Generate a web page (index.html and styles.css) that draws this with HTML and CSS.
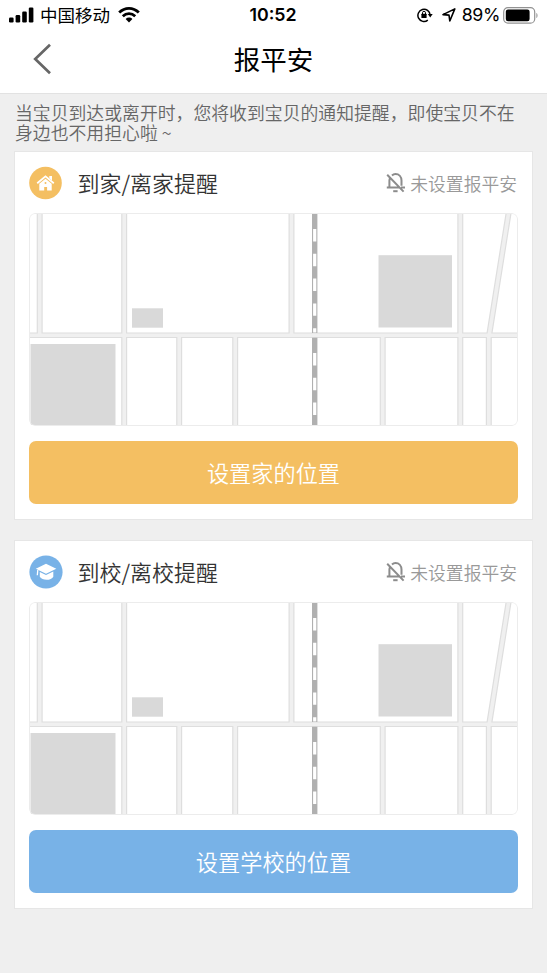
FILE: index.html
```html
<!DOCTYPE html>
<html lang="zh-CN">
<head>
<meta charset="utf-8">
<title>报平安</title>
<link rel="stylesheet" href="styles.css">
</head>
<body>
<svg class="defs" width="0" height="0" aria-hidden="true">
  <symbol id="map" viewBox="0 0 489 213">
    <rect width="489" height="213" fill="#fff"/>
    <g fill="#d9d9d9">
      <rect x="1.5" y="131" width="85" height="81"/>
      <rect x="103" y="95.3" width="31" height="19.4"/>
      <rect x="349.5" y="42.2" width="73.5" height="72.3"/>
    </g>
    <g fill="none" stroke="#dedede" stroke-width="6">
      <path d="M10.7 0V122M95.2 0V213M262.5 0V122M431.3 0V213M150.2 122V213M206.2 122V213M353.7 122V213M459.8 122V213M479.6 0L460.2 122"/>
      <path d="M0 122.2H489" stroke-width="5.4"/>
    </g>
    <g fill="none" stroke="#f0f0f0" stroke-width="3.6">
      <path d="M10.7 0V122M95.2 0V213M262.5 0V122M431.3 0V213M150.2 122V213M206.2 122V213M353.7 122V213M459.8 122V213M479.6 0L460.2 122"/>
      <path d="M0 122.2H489" stroke-width="3.4"/>
    </g>
    <path d="M285.7 0V120M285.7 124.7V213" stroke="#b0b0b0" stroke-width="5.4"/>
    <path d="M285.7 16V28.4M285.7 40.8V53.2M285.7 65.6V78M285.7 90.4V102.8M285.7 115.2V119.5M285.7 140V152.4M285.7 164.8V177.2M285.7 189.6V202" stroke="#fff" stroke-width="3.2"/>
  </symbol>
  <symbol id="bell" viewBox="0 0 20 20">
    <g fill="none" stroke="#8c8c8c" stroke-width="2">
      <path d="M1.2 1.8L17.6 18.6M0.8 14.6H13.5M3.4 14.5V7.6C3.4 6.4 3.7 5.4 4.3 4.6M6 2.5C7 1.5 8.2 1 9.5 1C13 1 15.5 3.8 15.5 7.6V12.8M15 14.6H19"/>
      <path d="M7.2 18.2H11.6"/>
    </g>
  </symbol>
</svg>

<header class="top">
  <div class="status">
    <div class="status-left">
      <svg width="25" height="16" viewBox="0 0 25 16"><rect x="0" y="10.5" width="4.6" height="5" rx="1.2"/><rect x="6.6" y="8" width="4.6" height="7.5" rx="1.2"/><rect x="13.2" y="4.5" width="4.6" height="11" rx="1.2"/><rect x="19.8" y="0.5" width="4.6" height="15" rx="1.2"/></svg>
      <span class="carrier">中国移动</span>
      <svg class="wifi" width="22" height="16" viewBox="0 0 22 16"><g fill="none" stroke="#000" stroke-width="2.8"><path d="M1.2 5.6C6.8 0 15.2 0 20.8 5.6"/><path d="M4.8 9.2C8.4 5.8 13.6 5.8 17.2 9.2"/></g><path d="M7.6 11.9C9.6 10 12.4 10 14.4 11.9L11 15.5Z"/></svg>
    </div>
    <time class="clock">10:52</time>
    <div class="status-right">
      <svg width="16" height="16" viewBox="0 0 16 16"><path d="M10.8 13.2A6.1 6.1 0 1 1 13.1 8" fill="none" stroke="#000" stroke-width="1.5"/><path d="M10.8 7H15.7L13.2 10.4Z"/><rect x="4.4" y="6.8" width="5.2" height="4.1" rx=".5"/><path d="M5.5 7V5.8a1.5 1.5 0 0 1 3 0V7" fill="none" stroke="#000"/></svg>
      <svg class="locate" width="14" height="14" viewBox="0 0 14 14"><path d="M12.8 .9L1 6.6L7 7.1L7.8 13Z" fill="none" stroke="#000" stroke-width="1.6" stroke-linejoin="round"/></svg>
      <span class="percent">89%</span>
      <svg width="36" height="17" viewBox="0 0 36 17"><rect x=".7" y=".7" width="31" height="15.4" rx="4.2" fill="none" stroke="#929292" stroke-width="1.2"/><rect x="2.8" y="2.6" width="23.8" height="11.6" rx="2.2"/><path d="M33.4 6v5c1.5-.6 1.5-4.4 0-5Z" fill="#929292"/></svg>
    </div>
  </div>
  <nav class="nav">
    <svg class="back" width="20" height="32" viewBox="0 0 20 32"><path d="M17 1.7L2.2 16L17 30.2" fill="none" stroke="#666" stroke-width="2.7"/></svg>
    <h1>报平安</h1>
  </nav>
</header>

<main>
  <div class="intro">
    <p>当宝贝到达或离开时，您将收到宝贝的通知提醒，即使宝贝不在</p>
    <p>身边也不用担心啦<span class="tilde">~</span></p>
  </div>

  <section class="card">
    <div class="card-head">
      <svg class="badge" width="34" height="34" viewBox="0 0 34 34"><circle cx="16.5" cy="17" r="16.3" fill="#f4bf62"/><path d="M8.2 17.2L16.5 10.4L24.8 17.2" fill="none" stroke="#fff" stroke-width="1.8"/><path d="M20.3 10H23V14.5L20.3 12.3Z" fill="#fff"/><path d="M10.3 17.7L16.5 12.8L22.7 17.7V24.5H18.1V21H15.2V24.5H10.3Z" fill="#fff"/><circle cx="16.5" cy="17" r="1" fill="#f4bf62"/></svg>
      <h2>到家/离家提醒</h2>
      <svg class="bell" width="20" height="20"><use href="#bell"/></svg>
      <span class="state">未设置报平安</span>
    </div>
    <div class="map"><svg width="489" height="213"><use href="#map"/></svg></div>
    <button class="home">设置家的位置</button>
  </section>

  <section class="card">
    <div class="card-head">
      <svg class="badge" width="34" height="34" viewBox="0 0 34 34"><circle cx="17" cy="17" r="16.6" fill="#78b2e7"/><path d="M17 8.8L27.3 13.8L17 18.7L6.8 13.8Z" fill="#fff"/><path d="M10.8 17L17 20L24.3 16.6V21.7C22.5 25.8 13 25.8 10.8 21.8Z" fill="#fff"/><path d="M8.8 15L8.3 20.3" stroke="#fff" stroke-width="1.3"/></svg>
      <h2>到校/离校提醒</h2>
      <svg class="bell" width="20" height="20"><use href="#bell"/></svg>
      <span class="state">未设置报平安</span>
    </div>
    <div class="map"><svg width="489" height="213"><use href="#map"/></svg></div>
    <button class="school">设置学校的位置</button>
  </section>
</main>
</body>
</html>
```
FILE: styles.css
```css
* { box-sizing: border-box; }
body {
  margin: 0;
  min-height: 973px;
  background: #efefef;
  font-family: "Noto Sans CJK SC", sans-serif;
  font-weight: 350;
  color: #333;
}
svg { display: block; flex: none; }
.defs { position: absolute; }

.top {
  height: 94px;
  background: #fff;
  border-bottom: 1px solid #e2e2e2;
  color: #000;
}
.status {
  display: grid;
  grid-template-columns: 1fr auto 1fr;
  align-items: center;
  height: 30px;
  padding: 0 8px 0 9px;
}
.status-left, .status-right { display: flex; align-items: center; }
.status-right { justify-content: flex-end; }
.carrier { margin: 0 8px 0 6px; font-size: 17.5px; line-height: 30px; font-weight: 400; }
.clock { margin-right: 2px; font: 600 17.8px/30px Inter, sans-serif; }
.locate { margin: 0 6px 0 9px; }
.percent { margin-right: 3px; font: 400 17.8px/30px Inter, sans-serif; letter-spacing: -0.4px; }

.nav {
  display: grid;
  grid-template-columns: 60px 1fr 60px;
  align-items: center;
  height: 58px;
}
.back { margin-left: 33px; }
h1 { margin: 0; text-align: center; font-size: 26.5px; font-weight: 400; line-height: 58px; }

main { padding: 8px 15px 0; }
.intro { height: 50px; margin-right: -10px; }
.intro p { margin: 0; height: 20px; white-space: nowrap; font-size: 17.85px; line-height: 20px; color: #666; }
.tilde { margin-left: 4px; }

.card {
  height: 367px;
  margin-bottom: 22px;
  padding: 0 14px;
  background: #fff;
  box-shadow: 0 0 0 1px #e6e6e6;
}
.card-head { display: flex; align-items: center; height: 61px; }
h2 { margin: -2px auto 0 14.5px; font-size: 22px; font-weight: inherit; line-height: 32px; }
.bell { margin-right: 4px; }
.state { margin-right: 1px; font-size: 17.8px; line-height: 30px; color: #999; }
.map {
  position: relative;
  height: 213px;
  border-radius: 6px;
  overflow: hidden;
}
.map::after {
  content: "";
  position: absolute;
  inset: 0;
  border: 1.5px solid #ececec;
  border-radius: 6px;
}
button {
  display: block;
  width: 100%;
  height: 63px;
  margin: 15px 0 0;
  padding: 0;
  border: 0;
  border-radius: 7px;
  font: 350 22.2px/63px "Noto Sans CJK SC", sans-serif;
  color: #fff;
}
.home { background: #f4bf62; }
.school { background: #78b2e7; }
```
